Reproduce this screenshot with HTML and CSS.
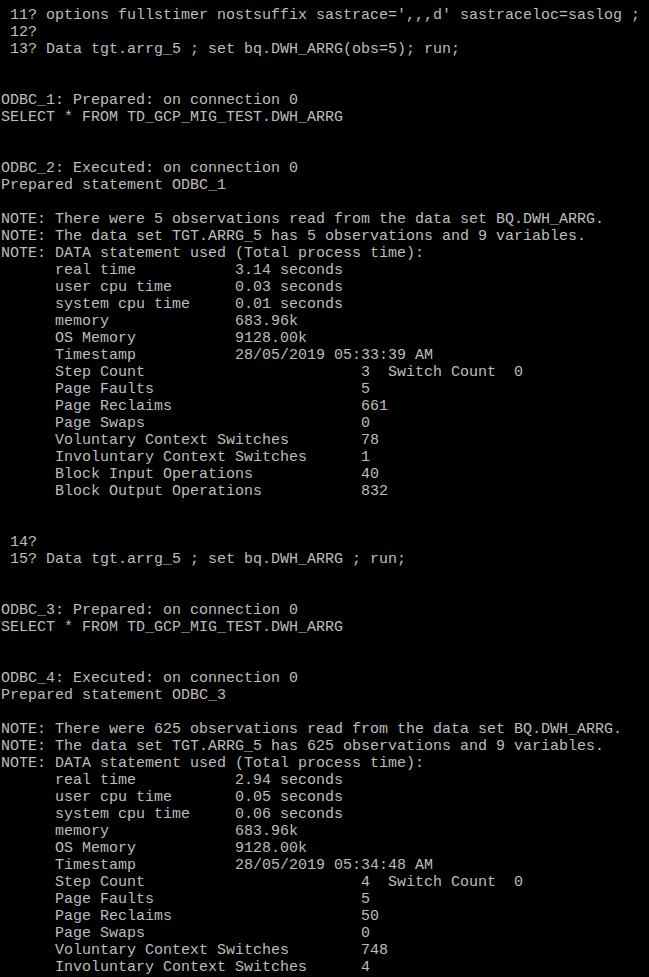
FILE: index.html
```html
<!DOCTYPE html>
<html>
<head>
<meta charset="utf-8">
<link rel="stylesheet" href="styles.css">
</head>
<body>
<pre class="log"> 11? options fullstimer nostsuffix sastrace=',,,d' sastraceloc=saslog ;
 12?
 13? Data tgt.arrg_5 ; set bq.DWH_ARRG(obs=5); run;


ODBC_1: Prepared: on connection 0
SELECT * FROM TD_GCP_MIG_TEST.DWH_ARRG


ODBC_2: Executed: on connection 0
Prepared statement ODBC_1

NOTE: There were 5 observations read from the data set BQ.DWH_ARRG.
NOTE: The data set TGT.ARRG_5 has 5 observations and 9 variables.
NOTE: DATA statement used (Total process time):
      real time           3.14 seconds
      user cpu time       0.03 seconds
      system cpu time     0.01 seconds
      memory              683.96k
      OS Memory           9128.00k
      Timestamp           28/05/2019 05:33:39 AM
      Step Count                        3  Switch Count  0
      Page Faults                       5
      Page Reclaims                     661
      Page Swaps                        0
      Voluntary Context Switches        78
      Involuntary Context Switches      1
      Block Input Operations            40
      Block Output Operations           832


 14?
 15? Data tgt.arrg_5 ; set bq.DWH_ARRG ; run;


ODBC_3: Prepared: on connection 0
SELECT * FROM TD_GCP_MIG_TEST.DWH_ARRG


ODBC_4: Executed: on connection 0
Prepared statement ODBC_3

NOTE: There were 625 observations read from the data set BQ.DWH_ARRG.
NOTE: The data set TGT.ARRG_5 has 625 observations and 9 variables.
NOTE: DATA statement used (Total process time):
      real time           2.94 seconds
      user cpu time       0.05 seconds
      system cpu time     0.06 seconds
      memory              683.96k
      OS Memory           9128.00k
      Timestamp           28/05/2019 05:34:48 AM
      Step Count                        4  Switch Count  0
      Page Faults                       5
      Page Reclaims                     50
      Page Swaps                        0
      Voluntary Context Switches        748
      Involuntary Context Switches      4</pre>
</body>
</html>
```

FILE: styles.css
```css
html, body {
  margin: 0;
  padding: 0;
  background: #000000;
  height: 100%;
  overflow: hidden;
}

.log {
  margin: 0;
  padding: 7px 0 0 1px;
  font-family: "Liberation Mono", "Courier New", monospace;
  font-size: 15px;
  line-height: 17px;
  color: #bdbdbd;
  white-space: pre;
}
```
